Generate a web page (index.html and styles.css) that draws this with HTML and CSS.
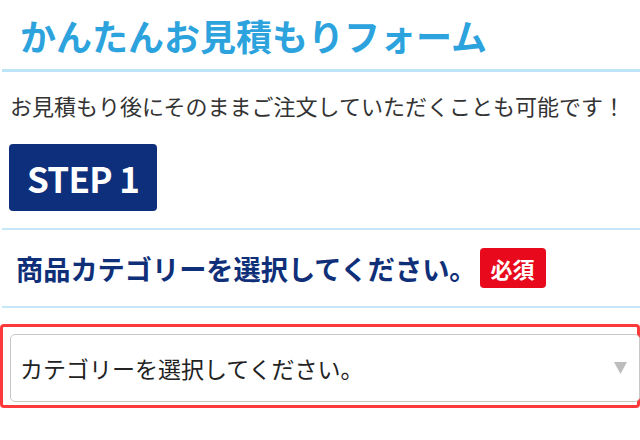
FILE: index.html
```html
<!DOCTYPE html>
<html lang="ja">
<head>
<meta charset="utf-8">
<title>かんたんお見積もりフォーム</title>
<link rel="stylesheet" href="styles.css">
</head>
<body>
<div class="page">
  <h1 class="title">かんたんお見積もりフォーム</h1>
  <p class="lead">お見積もり後にそのままご注文していただくことも可能です！</p>
  <div class="step">STEP 1</div>
  <div class="question">
    <h2 class="question-text">商品カテゴリーを選択してください。</h2>
    <span class="badge">必須</span>
  </div>
  <div class="field">
    <div class="select">
      <span class="select-text">カテゴリーを選択してください。</span>
      <svg class="select-arrow" width="13" height="12" viewBox="0 0 13 12"><polygon points="0,0 13,0 6.5,12" fill="#bdbdbd"/></svg>
    </div>
  </div>
</div>
</body>
</html>
```

FILE: styles.css
```css
* { box-sizing: border-box; }
html, body { margin: 0; padding: 0; background: #fff; }
body {
  font-family: "Noto Sans CJK JP", "Noto Sans", sans-serif;
  width: 640px;
}
.page { display: flex; flex-direction: column; }
.title {
  margin: 0 0 0 2px;
  padding: 17px 0 16px 18px;
  font-size: 36px;
  line-height: 36px;
  font-weight: 700;
  color: #2da3de;
  border-bottom: 3px solid #bee4f7;
}
.lead {
  margin: 22px 0 0 10px;
  font-size: 22px;
  line-height: 22px;
  color: #333;
  white-space: nowrap;
}
.step {
  align-self: flex-start;
  width: 148px;
  height: 67px;
  margin: 28px 0 0 9px;
  padding: 15px 0 15px 18px;
  font-size: 35px;
  line-height: 37px;
  letter-spacing: -0.7px;
  font-weight: 700;
  color: #fff;
  background: #0e2f7b;
  border-radius: 4px;
}
.question {
  display: flex;
  align-items: center;
  gap: 3px;
  margin: 17px 0 0 2px;
  padding: 18px 0 18px 14px;
  border-top: 2px solid #c6e7f9;
  border-bottom: 2px solid #c6e7f9;
}
.question-text {
  margin: 0;
  font-size: 27.2px;
  line-height: 30px;
  font-weight: 700;
  color: #0f3079;
  white-space: nowrap;
}
.badge {
  display: flex;
  align-items: center;
  height: 40px;
  padding: 0 11px;
  font-size: 22px;
  font-weight: 700;
  color: #fff;
  background: #e8091c;
  border-radius: 4px;
}
.field {
  margin-top: 16px;
  width: 640px;
  padding: 7px 0 3px 7px;
  border: 3px solid #fc3a3c;
  border-radius: 4px;
}
.select {
  display: flex;
  align-items: center;
  justify-content: space-between;
  height: 68px;
  margin-right: -3px;
  padding: 0 12px 0 9px;
  border: 1.5px solid #c8c8c8;
  border-radius: 5px;
  background: #fff;
}
.select-text {
  font-size: 23px;
  color: #222;
}
.select-arrow { display: block; }
```
